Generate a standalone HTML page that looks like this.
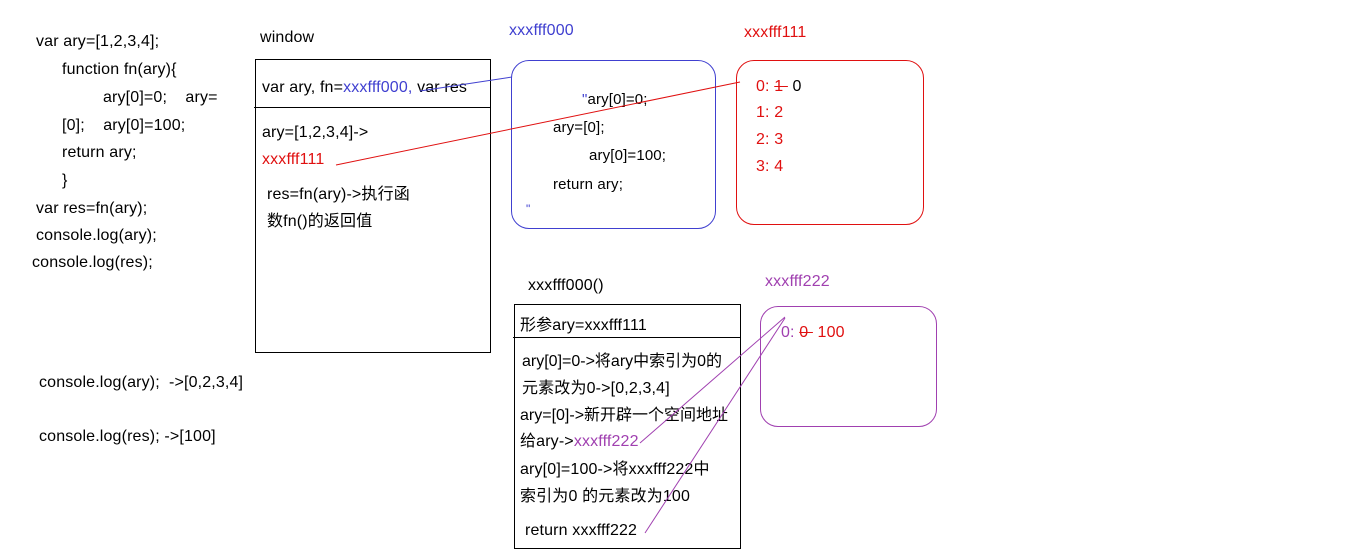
<!DOCTYPE html>
<html><head><meta charset="utf-8"><style>
body{margin:0;width:1347px;height:550px;background:#fff;position:relative;overflow:hidden;font-family:"Liberation Sans","Noto Sans CJK SC",sans-serif;font-size:16px;letter-spacing:0.15px;color:#000}
.t{position:absolute;white-space:nowrap;line-height:18px}
.b{position:absolute;border:1px solid #000;box-sizing:border-box}
.blue{color:#4040d0}.red{color:#e01010}.pur{color:#a040b0}
</style></head><body>
<div class="t" style="left:36px;top:33px">var ary=[1,2,3,4];</div>
<div class="t" style="left:62px;top:61px">function fn(ary){</div>
<div class="t" style="left:103px;top:89px">ary[0]=0;&nbsp;&nbsp;&nbsp;&nbsp;ary=</div>
<div class="t" style="left:62px;top:117px">[0];&nbsp;&nbsp;&nbsp;&nbsp;ary[0]=100;</div>
<div class="t" style="left:62px;top:144px">return ary;</div>
<div class="t" style="left:62px;top:172px">}</div>
<div class="t" style="left:36px;top:200px">var res=fn(ary);</div>
<div class="t" style="left:36px;top:227px">console.log(ary);</div>
<div class="t" style="left:32px;top:254px">console.log(res);</div>
<div class="t" style="left:39px;top:374px">console.log(ary);&nbsp;&nbsp;-&gt;[0,2,3,4]</div>
<div class="t" style="left:39px;top:428px">console.log(res); -&gt;[100]</div>

<div class="t" style="left:260px;top:29px">window</div>
<div class="b" style="left:255px;top:59px;width:236px;height:294px"></div>
<div style="position:absolute;left:254px;top:107px;width:236px;height:1px;background:#000"></div>
<div class="t" style="left:262px;top:79px">var ary, fn=<span class="blue">xxxfff000,</span> var res</div>
<div class="t" style="left:262px;top:124px">ary=[1,2,3,4]-&gt;</div>
<div class="t red" style="left:262px;top:151px">xxxfff111</div>
<div class="t" style="left:267px;top:186px">res=fn(ary)-&gt;执行函</div>
<div class="t" style="left:267px;top:213px">数fn()的返回值</div>

<div class="t blue" style="left:509px;top:22px">xxxfff000</div>
<div class="b" style="left:511px;top:60px;width:205px;height:169px;border-color:#4040d0;border-radius:18px"></div>
<div class="t" style="left:582px;top:91px;font-size:15px"><span class="blue">"</span>ary[0]=0;</div>
<div class="t" style="left:553px;top:119px;font-size:15px">ary=[0];</div>
<div class="t" style="left:589px;top:147px;font-size:15px">ary[0]=100;</div>
<div class="t" style="left:553px;top:176px;font-size:15px">return ary;</div>
<div class="t blue" style="left:526px;top:200px;font-size:12px">"</div>

<div class="t red" style="left:744px;top:24px">xxxfff111</div>
<div class="b" style="left:736px;top:60px;width:188px;height:165px;border-color:#e01010;border-radius:18px"></div>
<div class="t red" style="left:756px;top:78px">0: <s>1 </s>&nbsp;<span style="color:#000">0</span></div>
<div class="t red" style="left:756px;top:104px">1: 2</div>
<div class="t red" style="left:756px;top:131px">2: 3</div>
<div class="t red" style="left:756px;top:158px">3: 4</div>

<div class="t" style="left:528px;top:277px">xxxfff000()</div>
<div class="b" style="left:514px;top:304px;width:227px;height:245px"></div>
<div style="position:absolute;left:513px;top:337px;width:228px;height:1px;background:#000"></div>
<div class="t" style="left:520px;top:317px">形参ary=xxxfff111</div>
<div class="t" style="left:522px;top:353px;letter-spacing:0">ary[0]=0-&gt;将ary中索引为0的</div>
<div class="t" style="left:522px;top:380px">元素改为0-&gt;[0,2,3,4]</div>
<div class="t" style="left:520px;top:407px;letter-spacing:0">ary=[0]-&gt;新开辟一个空间地址</div>
<div class="t" style="left:520px;top:433px">给ary-&gt;<span class="pur">xxxfff222</span></div>
<div class="t" style="left:520px;top:461px">ary[0]=100-&gt;将xxxfff222中</div>
<div class="t" style="left:520px;top:488px">索引为0 的元素改为100</div>
<div class="t" style="left:525px;top:522px">return xxxfff222</div>

<div class="t pur" style="left:765px;top:273px">xxxfff222</div>
<div class="b" style="left:760px;top:306px;width:177px;height:121px;border-color:#a040b0;border-radius:18px"></div>
<div class="t pur" style="left:781px;top:324px">0: <s class="red">0 </s>&nbsp;<span class="red">100</span></div>

<svg width="1347" height="550" style="position:absolute;left:0;top:0">
<line x1="420" y1="91" x2="512" y2="77" stroke="#4040d0" stroke-width="1"/>
<line x1="336" y1="165" x2="740" y2="82" stroke="#e01010" stroke-width="1"/>
<line x1="640" y1="443" x2="785" y2="317" stroke="#a040b0" stroke-width="1"/>
<line x1="645" y1="533" x2="785" y2="318" stroke="#a040b0" stroke-width="1"/>
</svg>
</body></html>
